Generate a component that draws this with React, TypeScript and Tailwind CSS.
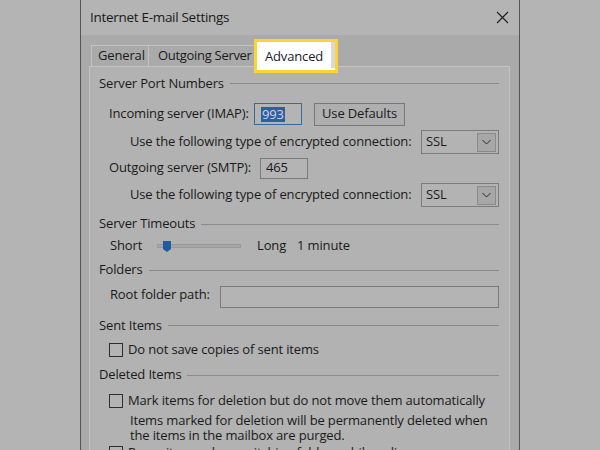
import React from "react";

const font = { fontFamily: '"Open Sans", "Noto Sans", sans-serif' };

function Header({ label }: { label: string }) {
  return (
    <div className="flex items-center gap-[6px] h-full">
      <span className="whitespace-nowrap">{label}</span>
      <div className="flex-1 h-px bg-[#8a8a8a]" />
    </div>
  );
}

function Select() {
  return (
    <div className="w-[78px] h-[24px] border border-[#7c7c7c] bg-[#b3b3b3] flex items-center justify-between pl-[4px] pr-[2px]">
      <span>SSL</span>
      <div className="w-[19px] h-[19px] bg-[#a7a7a7] border border-[#8a8a8a] flex items-center justify-center">
        <svg width="9" height="6" viewBox="0 0 9 6">
          <path d="M0.5 1 L4.5 5 L8.5 1" fill="none" stroke="#2a2a2a" strokeWidth="1" />
        </svg>
      </div>
    </div>
  );
}

function Check({ checked = false }: { checked?: boolean }) {
  return (
    <div className="w-[14px] h-[14px] border border-[#2e2e2e] bg-[#b4b4b4] flex items-center justify-center shrink-0">
      {checked && (
        <svg width="11" height="9" viewBox="0 0 11 9">
          <path d="M1 4.5 L4 7.5 L10 1" fill="none" stroke="#1a1a1a" strokeWidth="1.3" />
        </svg>
      )}
    </div>
  );
}

export default function App() {
  return (
    <div
      className="w-[600px] h-[450px] bg-[#b4b4b4] overflow-hidden text-[#1a1a1a] text-[13px] tracking-[-0.15px]"
      style={font}
    >
      <div className="ml-[80px] w-[440px] h-[470px] border-x border-[#555555] bg-[#aaaaaa] flex flex-col">
        {/* title bar */}
        <div className="h-[35px] bg-[#b4b4b4] flex items-center justify-between pl-[9px] pr-[10px] shrink-0">
          <span className="text-[13.5px] tracking-[-0.3px] text-[#1a1a1a]">Internet E-mail Settings</span>
          <svg width="13" height="13" viewBox="0 0 13 13">
            <path d="M1 1 L12 12 M12 1 L1 12" stroke="#1e1e1e" strokeWidth="1.1" />
          </svg>
        </div>
        {/* tabs */}
        <div className="ml-[8px] mt-[10px] h-[21px] flex items-end shrink-0 relative z-10">
          <div className="ml-[2px] w-[57px] h-[21px] border-t border-l border-[#c2c2c2] flex items-center pl-[6px]">
            General
          </div>
          <div className="w-[106px] h-[21px] border-t border-l border-[#c2c2c2] flex items-center pl-[9px] tracking-[-0.3px]">
            Outgoing Server
          </div>
          <div className="w-[84px] h-[34px] -mb-[7px] border-[3px] border-[#fcd535] bg-white flex">
            <div className="flex-1 pl-[8px] pt-[5px] text-[#1a1a2a]">Advanced</div>
            <div className="w-[4px] bg-[#d9d9d9] mb-[2px]" />
          </div>
        </div>
        {/* panel */}
        <div className="ml-[8px] w-[421px] flex-1 border border-[#c3c3c3] bg-[#b2b2b2] pl-[9px] pr-[10px] flex flex-col">
          <div className="h-[33px] shrink-0">
            <Header label="Server Port Numbers" />
          </div>
          <div className="h-[28px] flex items-center pl-[10px]">
            <span className="w-[145px]">Incoming server (IMAP):</span>
            <div className="w-[48px] h-[22px] border border-[#3868a8] bg-[#b4b4b4] flex items-center pl-[6px]">
              <span className="bg-[#2d5fa3] text-[#cfd6e4] leading-[15px] px-px">993</span>
            </div>
            <div className="ml-[12px] w-[91px] h-[23px] border border-[#777777] bg-[#afafaf] flex items-center justify-center">
              Use Defaults
            </div>
          </div>
          <div className="h-[28px] flex items-center pl-[31px]">
            <span className="flex-1">Use the following type of encrypted connection:</span>
            <Select />
          </div>
          <div className="h-[24px] flex items-center pl-[10px]">
            <span className="w-[151px]">Outgoing server (SMTP):</span>
            <div className="w-[48px] h-[21px] border border-[#7a7a7a] bg-[#b4b4b4] flex items-center pl-[5px]">
              465
            </div>
          </div>
          <div className="h-[30px] flex items-center pl-[31px]">
            <span className="flex-1">Use the following type of encrypted connection:</span>
            <Select />
          </div>
          <div className="h-[28px] shrink-0">
            <Header label="Server Timeouts" />
          </div>
          <div className="h-[16px] flex items-center pl-[11px]">
            <span className="w-[47px]">Short</span>
            <div className="relative w-[84px] h-[4px] bg-[#a6a6a6] border border-[#999999]">
              <svg className="absolute left-[5px] -top-[4px]" width="8" height="11" viewBox="0 0 8 11">
                <path d="M0 0 H8 V8 L4 11 L0 8 Z" fill="#1f5c9e" />
              </svg>
            </div>
            <span className="ml-[16px]">Long</span>
            <span className="ml-[11px]">1 minute</span>
          </div>
          <div className="h-[32px] shrink-0">
            <Header label="Folders" />
          </div>
          <div className="h-[22px] flex items-center pl-[11px]">
            <span className="w-[111px] -mt-[5px]">Root folder path:</span>
            <div className="w-[280px] h-[22px] border border-[#7a7a7a] bg-[#b4b4b4]" />
          </div>
          <div className="h-[35px] shrink-0">
            <Header label="Sent Items" />
          </div>
          <div className="h-[14px] flex items-center pl-[10px] gap-[5px]">
            <Check />
            <span>Do not save copies of sent items</span>
          </div>
          <div className="h-[36px] shrink-0">
            <Header label="Deleted Items" />
          </div>
          <div className="h-[16px] flex items-center pl-[10px] gap-[5px]">
            <Check />
            <span>Mark items for deletion but do not move them automatically</span>
          </div>
          <div className="mt-[4px] pl-[31px] leading-[15px]">
            <div>Items marked for deletion will be permanently deleted when</div>
            <div>the items in the mailbox are purged.</div>
          </div>
          <div className="mt-[2px] h-[16px] flex items-center pl-[10px] gap-[5px]">
            <Check checked />
            <span>Purge items when switching folders while online</span>
          </div>
        </div>
      </div>
    </div>
  );
}
